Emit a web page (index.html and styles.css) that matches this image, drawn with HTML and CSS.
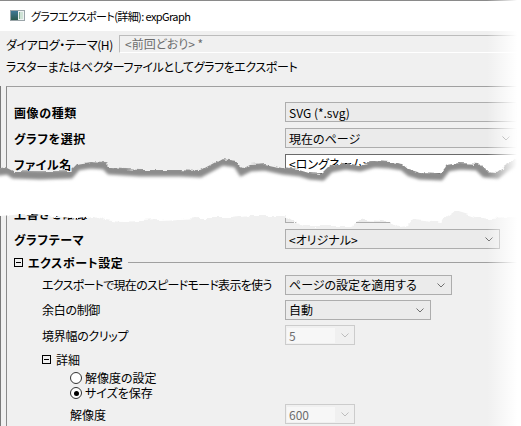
FILE: index.html
```html
<!DOCTYPE html>
<html lang="ja">
<head>
  <meta charset="UTF-8" />
  <title>グラフエクスポート(詳細): expGraph</title>
  <link rel="stylesheet" href="styles.css">
</head>
<body>
  <div class="win">
    <div class="titlebar">
      <svg class="appicon" width="15" height="11" viewBox="0 0 15 11">
        <defs>
          <linearGradient id="ig" x1="0" y1="0" x2="0" y2="1">
            <stop offset="0" stop-color="#3f7896"/>
            <stop offset="1" stop-color="#2c5a4e"/>
          </linearGradient>
        </defs>
        <rect x="0.5" y="0.5" width="14" height="10" fill="#eef2f2" stroke="#9aa4a8"/>
        <rect x="1" y="1" width="7" height="9" fill="url(#ig)"/>
        <rect x="9" y="2" width="4" height="7" fill="#cfe3d6"/>
        <rect x="9" y="2" width="1" height="7" fill="#7fa88f"/>
      </svg>
      <span class="wintitle">グラフエクスポート(詳細): expGraph</span>
    </div>

    <div class="themerow">
      <span class="themelabel">ダイアログ・テーマ(H)</span>
      <div class="themebox">&lt;前回どおり&gt; *</div>
    </div>
    <div class="desc">ラスターまたはベクターファイルとしてグラフをエクスポート</div>

    <div class="grid">
      <div class="tree">
        <div class="row h26">
          <span class="lbl b">画像の種類</span>
          <div class="cb wide">SVG (*.svg)</div>
        </div>
        <div class="row h26">
          <span class="lbl b">グラフを選択</span>
          <div class="cb wide">現在のページ
            <svg class="chev" width="8" height="5" viewBox="0 0 8 5"><polyline points="0.5,0.5 4,4 7.5,0.5"/></svg>
          </div>
        </div>
        <div class="row h26">
          <span class="lbl b">ファイル名</span>
          <div class="edit">&lt;ロングネーム&gt;</div>
        </div>
        <div class="gap"></div>
        <div class="row h26">
          <span class="lbl b">上書きを確認</span>
          <div class="cb w108">確認する</div>
        </div>
        <div class="row h26">
          <span class="lbl b">グラフテーマ</span>
          <div class="cb w215">&lt;オリジナル&gt;
            <svg class="chev" width="8" height="5" viewBox="0 0 8 5"><polyline points="0.5,0.5 4,4 7.5,0.5"/></svg>
          </div>
        </div>
        <div class="row h20 head">
          <span class="tog"></span>
          <span class="b">エクスポート設定</span>
          <span class="rule"></span>
        </div>
        <div class="row h25">
          <span class="lbl sub tight">エクスポートで現在のスピードモード表示を使う</span>
          <div class="cb w167">ページの設定を適用する
            <svg class="chev" width="8" height="5" viewBox="0 0 8 5"><polyline points="0.5,0.5 4,4 7.5,0.5"/></svg>
          </div>
        </div>
        <div class="row h25">
          <span class="lbl sub">余白の制御</span>
          <div class="cb w146">自動
            <svg class="chev" width="8" height="5" viewBox="0 0 8 5"><polyline points="0.5,0.5 4,4 7.5,0.5"/></svg>
          </div>
        </div>
        <div class="row h26">
          <span class="lbl sub">境界幅のクリップ</span>
          <div class="cb off w70"><span class="val">5</span>
            <svg class="chev" width="8" height="5" viewBox="0 0 8 5"><polyline points="0.5,0.5 4,4 7.5,0.5"/></svg>
          </div>
        </div>
        <div class="row h22 sub2">
          <span class="tog"></span>
          <span>詳細</span>
        </div>
        <div class="row h16 opt">
          <span class="radio"></span>
          <span>解像度の設定</span>
        </div>
        <div class="row h14 opt">
          <span class="radio on"></span>
          <span>サイズを保存</span>
        </div>
        <div class="row h28">
          <span class="lbl sub3">解像度</span>
          <div class="cb off w70"><span class="val">600</span>
            <svg class="chev" width="8" height="5" viewBox="0 0 8 5"><polyline points="0.5,0.5 4,4 7.5,0.5"/></svg>
          </div>
        </div>
      </div>
    </div>

    <!-- torn strip drawn over the skipped rows -->
    <svg class="tear" width="521" height="80" viewBox="0 0 521 80">
      <defs>
        <filter id="rough" filterUnits="userSpaceOnUse" x="-20" y="-20" width="561" height="120" color-interpolation-filters="sRGB">
          <feTurbulence type="fractalNoise" baseFrequency="0.09 0.18" numOctaves="4" seed="7"/>
          <feDisplacementMap in="SourceGraphic" scale="6" xChannelSelector="R" yChannelSelector="G"/>
        </filter>
        <filter id="blur" filterUnits="userSpaceOnUse" x="-20" y="-20" width="561" height="120">
          <feGaussianBlur stdDeviation="1.4"/>
        </filter>
        <path id="strip" d="M-10,19 L0,19 L8,18 L14,21 L40,21 L70,21 L77,14 L90,12 L105,13 L110,18 L140,20 L180,20 L200,21 L213,14 L222,9 L237,11 L242,19 L250,15 L265,14 L283,18 L300,20 L310,23 L322,24 L330,16 L345,13 L360,15 L375,11 L390,12 L403,14 L410,20 L420,23 L440,24 L447,15 L460,13 L478,14 L485,21 L497,22 L505,16 L515,10 L531,8
          L531,68 L510,68 L490,69 L475,67 L462,63 L455,61 L440,72 L425,70 L413,69 L408,75 L398,76 L393,73 L380,71 L365,70 L358,72 L350,76 L305,76 L297,73 L285,66 L270,66 L250,66 L230,68 L200,68 L180,69 L160,70 L140,71 L120,72 L105,70 L95,66 L85,67 L70,69 L55,67 L47,64 L20,64 L13,65 L0,66 L-10,66 Z"/>
        <mask id="cut" maskUnits="userSpaceOnUse" x="-20" y="-20" width="561" height="120">
          <use href="#strip" fill="#fff" filter="url(#rough)"/>
        </mask>
      </defs>
      <use href="#strip" fill="#fff" filter="url(#rough)"/>
      <g mask="url(#cut)">
        <polyline filter="url(#blur)" fill="none" stroke="#8c8c8c" stroke-width="9"
          points="-10,21 0,21 8,20 14,24 40,25 70,24 77,16 90,14 105,15 110,20 140,22 180,22 200,23 213,16 222,11 237,13 242,21 250,17 265,16 283,20 300,22 310,25 322,26 330,18 345,15 360,17 375,13 390,14 403,16 410,22 420,25 440,26 447,17 460,15 478,16 485,23 497,24 505,18 515,12 531,10"/>
      </g>
    </svg>

    <div class="fade"></div>
  </div>
</body>
</html>
```

FILE: styles.css
```css
body {
  margin: 0;
  background: #fff;
  font-family: "Noto Sans CJK JP", "Noto Sans", sans-serif;
  font-size: 12px;
  font-feature-settings: "palt";
  color: #000;
}

.win {
  position: relative;
  width: 521px;
  height: 426px;
  overflow: hidden;
  background: #f0f0f0;
}

/* title bar */
.titlebar {
  height: 30px;
  border-top: 1px solid #8a8a8a;
  background: #fff;
  display: flex;
  align-items: center;
  gap: 6px;
  padding-left: 10px;
}

.appicon {
  flex: none;
  margin-top: -2px;
}

.wintitle {
  font-size: 11px;
  letter-spacing: -0.6px;
}

/* dialog theme line */
.themerow {
  display: flex;
  align-items: center;
  height: 18px;
  margin-top: 4px;
  padding-left: 6px;
}

.themelabel {
  width: 113px;
  flex: none;
  letter-spacing: -0.4px;
  white-space: nowrap;
}

.themebox {
  flex: 1;
  height: 18px;
  box-sizing: border-box;
  border: 1px solid #bcbcbc;
  border-right: none;
  border-bottom-color: #fff;
  color: #6d6d6d;
  padding-left: 5px;
  line-height: 15px;
}

.desc {
  height: 28px;
  line-height: 28px;
  padding-left: 6px;
  letter-spacing: -0.4px;
}

/* property tree */
.grid {
  margin-top: 5px;
  border-left: 1px solid #7a7a7a;
  padding-left: 5px;
}

.tree {
  border-top: 1px solid #a0a0a0;
  border-left: 1px solid #8a8a8a;
  padding-top: 12px;
}

.row {
  display: flex;
  align-items: center;
}

.h14 { height: 14px; }
.h16 { height: 16px; }
.h20 { height: 20px; }
.h22 { height: 22px; }
.h25 { height: 25px; }
.h26 { height: 26px; }
.h28 { height: 28px; }

.gap {
  height: 23px;
}

.lbl {
  width: 278px;
  flex: none;
  box-sizing: border-box;
  padding-left: 7px;
  white-space: nowrap;
}

.lbl.sub {
  padding-left: 35px;
  letter-spacing: -0.3px;
}

.lbl.tight {
  letter-spacing: -0.7px;
}

.lbl.sub3 {
  padding-left: 63px;
}

.b {
  font-weight: bold;
  letter-spacing: 0.6px;
}

/* combo boxes */
.cb {
  position: relative;
  height: 20px;
  box-sizing: border-box;
  border: 1px solid #adadad;
  background: #ebebeb;
  display: flex;
  align-items: center;
  padding-left: 3px;
  white-space: nowrap;
}

.cb .chev {
  position: absolute;
  right: 6px;
  top: 7px;
  fill: none;
  stroke: #6f6f6f;
}

.wide { width: 232px; }
.w215 { width: 215px; }
.w167 { width: 167px; }
.w146 { width: 146px; }
.w108 { width: 108px; }
.w70 { width: 70px; }

.cb.off {
  border-color: #cccccc;
  background: #f0f0f0;
  padding-left: 1px;
  color: #6d6d6d;
}

.cb.off .val {
  width: 46px;
  height: 15px;
  line-height: 15px;
  padding-left: 2px;
  background: #f7f7f7;
}

.cb.off .chev {
  right: 5px;
  stroke: #bdbdbd;
}

.edit {
  width: 240px;
  height: 20px;
  box-sizing: border-box;
  background: #fff;
  border-top: 1px solid #6a6a6a;
  border-left: 1px solid #6a6a6a;
  border-bottom: 1px solid #6a6a6a;
  padding-left: 3px;
  line-height: 18px;
}

/* section headers */
.tog {
  position: relative;
  width: 9px;
  height: 9px;
  flex: none;
  box-sizing: border-box;
  border: 1px solid #000;
  margin-right: 5px;
}

.tog::after {
  content: "";
  position: absolute;
  left: 1px;
  top: 3px;
  width: 5px;
  height: 1px;
  background: #000;
}

.head {
  padding-left: 7px;
}

.head .rule {
  flex: 1;
  height: 1px;
  margin-left: 5px;
  background: #a0a0a0;
}

.sub2 {
  padding-left: 35px;
}

/* radio buttons */
.opt {
  padding-left: 63px;
  gap: 3px;
  line-height: 14px;
}

.radio {
  position: relative;
  width: 12px;
  height: 12px;
  flex: none;
  box-sizing: border-box;
  border: 1px solid #333;
  border-radius: 50%;
  background: #fff;
}

.radio.on::after {
  content: "";
  position: absolute;
  left: 2.5px;
  top: 2.5px;
  width: 5px;
  height: 5px;
  border-radius: 50%;
  background: #000;
}

/* torn strip and right edge fade */
.tear {
  position: absolute;
  left: 0;
  top: 150px;
}

.fade {
  position: absolute;
  top: 0;
  right: 0;
  width: 34px;
  height: 100%;
  background: linear-gradient(to right, rgba(255, 255, 255, 0), #fff 88%);
}
```
